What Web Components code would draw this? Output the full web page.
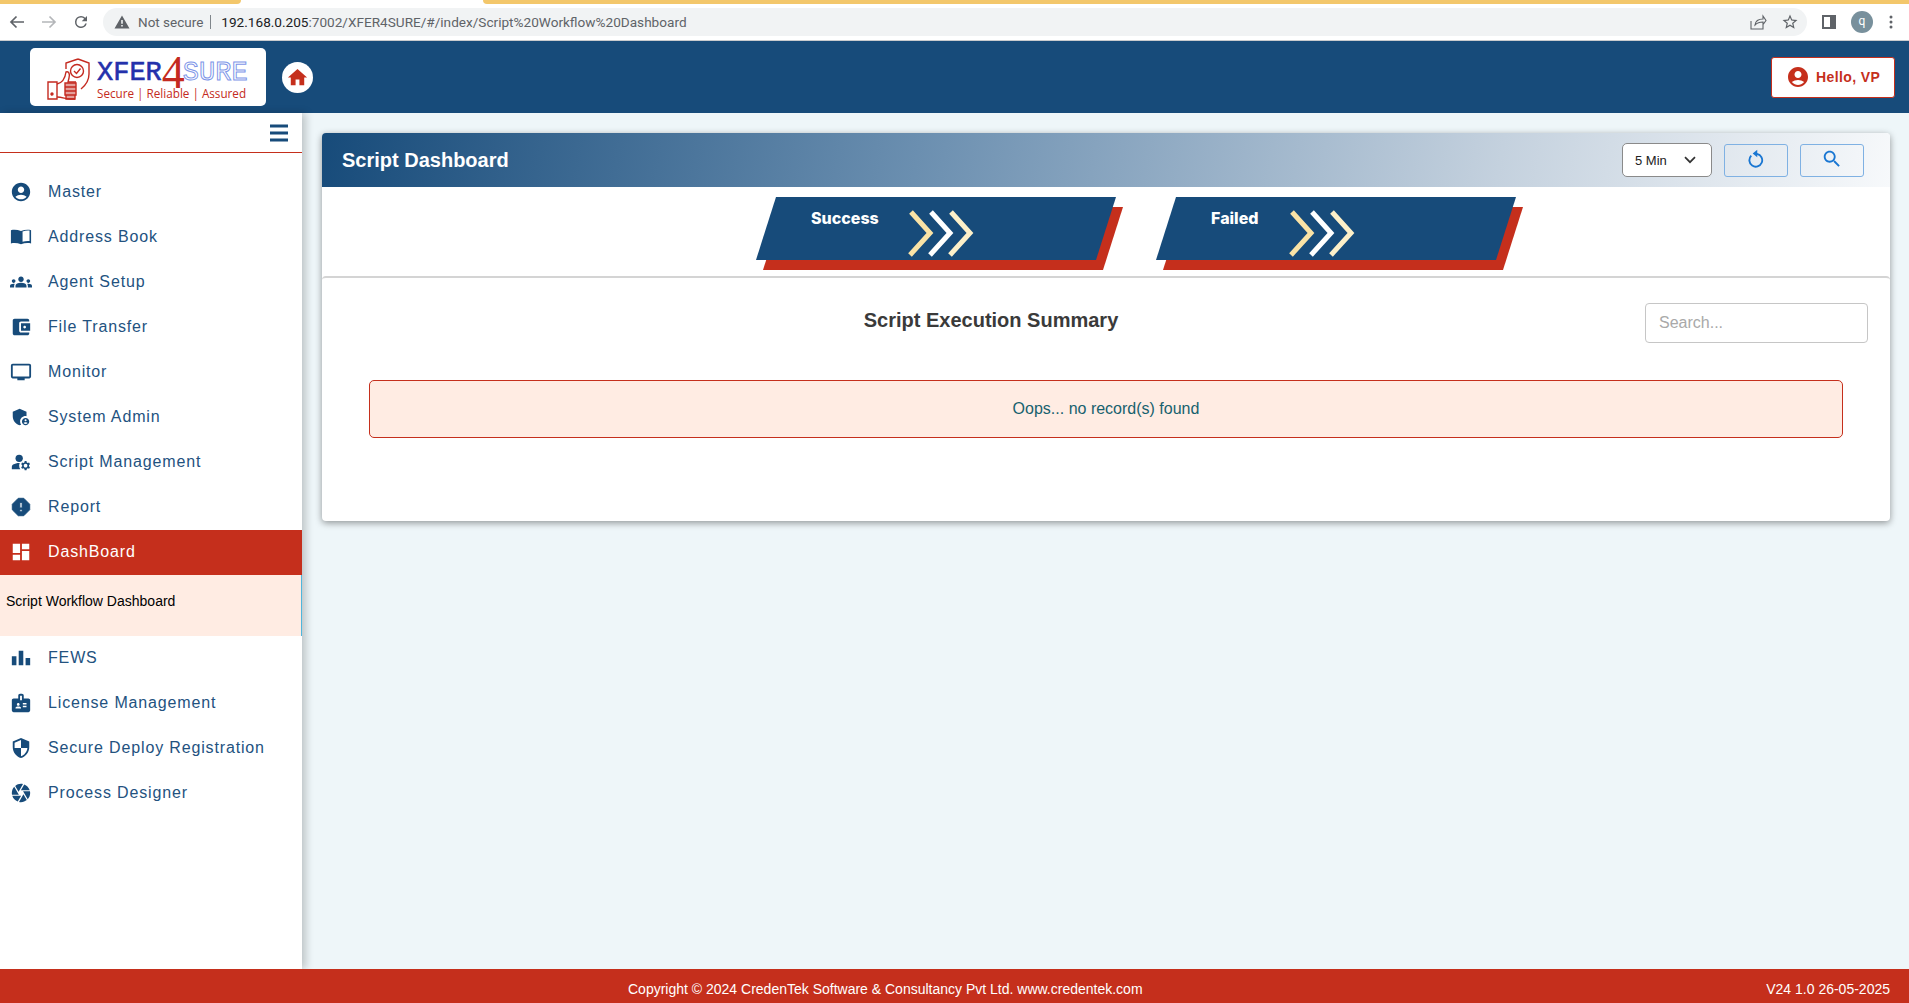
<!DOCTYPE html>
<html>
<head>
<meta charset="utf-8">
<title>Script Dashboard</title>
<style>
  html, body { margin: 0; height: 100%; overflow: hidden; }
  body { font-family: "Liberation Sans", Arial, sans-serif; }
  #app { display: flex; flex-direction: column; height: 100vh; }
  #middle { display: flex; flex: 1; min-height: 0; }
</style>
</head>
<body>
<div id="app">
  <browser-bar></browser-bar>
  <app-header></app-header>
  <div id="middle">
    <side-nav>
      <nav-item icon="account">Master</nav-item>
      <nav-item icon="book">Address Book</nav-item>
      <nav-item icon="groups">Agent Setup</nav-item>
      <nav-item icon="wallet">File Transfer</nav-item>
      <nav-item icon="tv">Monitor</nav-item>
      <nav-item icon="admin">System Admin</nav-item>
      <nav-item icon="manage">Script Management</nav-item>
      <nav-item icon="report">Report</nav-item>
      <nav-item icon="dashboard" active>DashBoard</nav-item>
      <nav-sub>Script Workflow Dashboard</nav-sub>
      <nav-item icon="bars">FEWS</nav-item>
      <nav-item icon="badge">License Management</nav-item>
      <nav-item icon="security">Secure Deploy Registration</nav-item>
      <nav-item icon="camera">Process Designer</nav-item>
    </side-nav>
    <dash-main>
      <dash-panel heading="Script Dashboard">
        <status-banner slot="banners" chevron="151">Success</status-banner>
        <status-banner slot="banners" chevron="132">Failed</status-banner>
        <summary-card heading="Script Execution Summary">Oops... no record(s) found</summary-card>
      </dash-panel>
    </dash-main>
  </div>
  <app-footer version="V24 1.0 26-05-2025">Copyright © 2024 CredenTek Software &amp; Consultancy Pvt Ltd. www.credentek.com</app-footer>
</div>

<script>
const ICONS = {
  account: '<path d="M12 2C6.48 2 2 6.48 2 12s4.48 10 10 10 10-4.48 10-10S17.52 2 12 2zm0 4c1.93 0 3.5 1.57 3.5 3.5S13.93 13 12 13s-3.5-1.57-3.5-3.5S10.07 6 12 6zm0 14c-2.03 0-4.43-.82-6.14-2.88C7.55 15.8 9.68 15 12 15s4.45.8 6.14 2.12C16.43 19.18 14.03 20 12 20z"/>',
  book: '<path d="M1 4.500c3.500-.8 7.500-.5 11 1V20c-3.500-1.500-7.500-1.800-11-1z"/><path fill-rule="evenodd" d="M12 5.500c3.500-1.500 7.500-1.800 11-1V19c-3.500-.8-7.500-.5-11 1zm9.300-.6c-2.500-.3-5.200.1-7.600 1.100v11.300c2.400-.9 5.100-1.200 7.600-.9z"/>',
  groups: '<path d="M12 12.750c1.630 0 3.070.390 4.240.900 1.080.480 1.760 1.560 1.760 2.730V18H6v-1.610c0-1.180.680-2.260 1.760-2.730 1.170-.520 2.610-.910 4.240-.910zM4 13c1.100 0 2-.900 2-2s-.900-2-2-2-2 .900-2 2 .900 2 2 2zm1.130 1.100c-.370-.060-.740-.100-1.130-.100-.990 0-1.930.210-2.780.580C.480 14.900 0 15.620 0 16.430V18h4.500v-1.610c0-.830.230-1.610.630-2.290zM20 13c1.100 0 2-.900 2-2s-.900-2-2-2-2 .900-2 2 .900 2 2 2zm4 3.430c0-.810-.480-1.530-1.220-1.850-.850-.370-1.790-.580-2.780-.580-.390 0-.760.040-1.130.100.400.680.630 1.460.630 2.290V18H24v-1.570zM12 6c1.660 0 3 1.340 3 3s-1.340 3-3 3-3-1.340-3-3 1.340-3 3-3z"/>',
  wallet: '<path d="M21 18v1c0 1.100-.900 2-2 2H5c-1.110 0-2-.900-2-2V5c0-1.100.890-2 2-2h14c1.100 0 2 .900 2 2v1h-9c-1.110 0-2 .900-2 2v8c0 1.100.890 2 2 2h9zm-9-2h10V8H12v8zm4-2.500c-.830 0-1.500-.670-1.500-1.500s.670-1.500 1.500-1.500 1.500.670 1.500 1.500-.670 1.500-1.500 1.500z"/>',
  tv: '<path d="M21 3H3c-1.100 0-2 .900-2 2v12c0 1.100.900 2 2 2h5v2h8v-2h5c1.100 0 1.990-.900 1.990-2L23 5c0-1.100-.900-2-2-2zm0 14H3V5h18v12z"/>',
  admin: '<path d="M17 11c.340 0 .670.040 1 .090V6.270L10.500 3 3 6.270v4.910c0 4.540 3.200 8.790 7.500 9.820.550-.130 1.080-.320 1.600-.550-.690-.980-1.100-2.170-1.100-3.450 0-3.310 2.690-6 6-6z"/><path fill-rule="evenodd" d="M17 13c-2.210 0-4 1.790-4 4s1.790 4 4 4 4-1.790 4-4-1.790-4-4-4zm0 1.400a1.100 1.100 0 1 1 0 2.200 1.100 1.100 0 0 1 0-2.200zm0 5.200c-1 0-1.800-.400-2.200-1 .300-.600 1.300-.900 2.200-.900s1.900.300 2.200.900c-.400.600-1.200 1-2.200 1z"/>',
  manage: '<circle cx="10" cy="8" r="4"/><path d="M10.670 13.020c-.220-.010-.440-.020-.670-.020-2.420 0-4.680.670-6.610 1.820C2.510 15.340 2 16.320 2 17.350V20h9.260c-.790-1.130-1.260-2.510-1.260-4 0-1.070.250-2.070.670-2.980z"/><path d="M20.750 16c0-.220-.030-.420-.060-.630l1.140-1.010-1-1.730-1.450.490c-.320-.270-.680-.480-1.080-.630L18 11h-2l-.300 1.490c-.400.150-.760.360-1.080.630l-1.450-.490-1 1.730 1.140 1.010c-.030.210-.060.410-.060.630s.030.420.060.630l-1.140 1.010 1 1.730 1.450-.490c.320.270.680.480 1.080.630L16 21h2l.300-1.490c.400-.150.760-.360 1.080-.630l1.450.490 1-1.730-1.140-1.010c.030-.210.060-.410.060-.630zM17 18c-1.100 0-2-.900-2-2s.900-2 2-2 2 .900 2 2-.900 2-2 2z"/>',
  report: '<path d="M15 2.500H9L2.500 9v6L9 21.500h6l6.500-6.500V9zM12 17.300c-.720 0-1.300-.580-1.300-1.300 0-.720.580-1.300 1.300-1.300.720 0 1.300.580 1.300 1.300 0 .720-.580 1.300-1.300 1.300zm1.200-4.300h-2.400V7h2.400z" stroke="currentColor" stroke-width="1" stroke-linejoin="round"/>',
  dashboard: '<path d="M3 13h8V3H3v10zm0 8h8v-6H3v6zm10 0h8V11h-8v10zm0-18v6h8V3h-8z"/>',
  bars: '<path d="M2 10h5v10H2zM9.500 4h5v16h-5zM17 12h5v8h-5z"/>',
  badge: '<path d="M20 7h-5V4c0-1.100-.900-2-2-2h-2c-1.100 0-2 .900-2 2v3H4c-1.100 0-2 .900-2 2v11c0 1.100.900 2 2 2h16c1.100 0 2-.900 2-2V9c0-1.100-.900-2-2-2zM9 12c.830 0 1.500.670 1.500 1.500S9.830 15 9 15s-1.500-.670-1.500-1.500S8.170 12 9 12zm3 6H6v-.750c0-1 2-1.500 3-1.500s3 .500 3 1.500V18zm1-9h-2V4h2v5zm5 7.500h-4V15h4v1.500zm0-3h-4V12h4v1.500z"/>',
  security: '<path d="M12 1L3 5v6c0 5.550 3.840 10.740 9 12 5.160-1.260 9-6.450 9-12V5l-9-4zm0 10.990h7c-.530 4.120-3.280 7.790-7 8.940V12H5V6.300l7-3.110v8.800z"/>',
  camera: '<path d="M9.400 10.500l4.770-8.260C13.470 2.090 12.750 2 12 2c-2.400 0-4.600.850-6.320 2.250l3.660 6.350.060-.100zM21.540 9c-.920-2.920-3.150-5.260-6-6.340L11.880 9h9.660zm.260 1h-7.490l.290.500 4.760 8.250C21 16.970 22 14.610 22 12c0-.690-.070-1.350-.200-2zM8.540 12l-3.900-6.750C3.010 7.030 2 9.390 2 12c0 .690.070 1.350.200 2h7.490l-1.150-2zm-6.080 3c.920 2.920 3.150 5.260 6 6.340L12.120 15H2.460zm11.270 0l-3.900 6.760c.700.150 1.420.240 2.170.240 2.400 0 4.600-.850 6.320-2.250l-3.660-6.350-.930 1.600z"/>',
  home: '<path d="M10 20v-6h4v6h5v-8h3L12 3 2 12h3v8z"/>',
  search: '<path d="M15.500 14h-.790l-.280-.270C15.410 12.590 16 11.110 16 9.500 16 5.910 13.090 3 9.500 3S3 5.910 3 9.500 5.910 16 9.500 16c1.610 0 3.090-.590 4.230-1.570l.270.280v.790l5 4.990L20.490 19l-4.990-5zm-6 0C7.010 14 5 11.990 5 9.500S7.010 5 9.500 5 14 7.010 14 9.500 11.990 14 9.500 14z"/>',
  refresh: '<path d="M13.500 1L8 5.500l5.500 4.500V7.100a6.600 6.600 0 1 1-6.400 1.700L5.500 7.300A8.800 8.800 0 1 0 13.500 4.900z"/>',
  menu: '<path d="M3 3.500h18v3H3zM3 10.500h18v3H3zM3 17.500h18v3H3z"/>',
};

class AppIcon extends HTMLElement {
  connectedCallback() {
    const size = this.getAttribute('size') || 24;
    this.attachShadow({ mode: 'open' }).innerHTML = `
      <style>
        :host { display: inline-flex; flex: none; width: ${size}px; height: ${size}px; }
        svg { width: 100%; height: 100%; fill: currentColor; display: block; }
      </style>
      <svg viewBox="0 0 24 24">${ICONS[this.getAttribute('name')] || ''}</svg>`;
  }
}

class BrowserBar extends HTMLElement {
  constructor() {
    super();
    this.attachShadow({ mode: 'open' }).innerHTML = `
      <style>
        :host { display: block; height: 41px; background: #fff; border-bottom: 1px solid #c9cbce; box-sizing: border-box; }
        .strip { display: flex; height: 4px; }
        .strip div { background: #f3c76b; }
        .strip .a { width: 241px; border-bottom-right-radius: 4px; }
        .strip .gap { width: 242px; background: #fff; }
        .strip .b { flex: 1; border-bottom-left-radius: 4px; }
        .row { display: flex; align-items: center; height: 36px; }
        .nav { width: 103px; display: flex; flex: none; }
        .nav svg { margin-left: 14px; }
        .nav svg:first-child { margin-left: 8px; }
        .omni { height: 28px; width: 1704px; background: #f1f3f4; border-radius: 14px; display: flex; align-items: center; color: #5f6368; font: 13.500px Roboto, "Liberation Sans", sans-serif; }
        .warn { margin-left: 11px; margin-right: 8px; }
        .sep { width: 1px; height: 14px; background: #80868b; margin: 0 10px 0 7px; }
        .url { color: #202124; flex: 1; font-size: 13.600px; }
        .url span { color: #5f6368; }
        .end { display: flex; align-items: center; margin-right: 8px; }
        .end svg + svg { margin-left: 14px; }
        .tools { display: flex; align-items: center; flex: 1; }
        .avatar { width: 22px; height: 22px; margin-left: 15px; border-radius: 50%; background: #78909c; color: #fff; font: 12px/20px Roboto, sans-serif; text-align: center; }
      </style>
      <div class="strip"><div class="a"></div><div class="gap"></div><div class="b"></div></div>
      <div class="row">
        <div class="nav">
          <svg width="18" height="18" viewBox="0 0 18 18" fill="none" stroke="#5f6368" stroke-width="1.700"><path d="M16 9H3M8.500 3.500L3 9l5.500 5.500"/></svg>
          <svg width="18" height="18" viewBox="0 0 18 18" fill="none" stroke="#b4b6b9" stroke-width="1.700"><path d="M2 9h13M9.500 3.500L15 9l-5.500 5.500"/></svg>
          <svg width="18" height="18" viewBox="0 0 24 24" fill="#5f6368"><path d="M17.650 6.350A7.960 7.960 0 0 0 12 4a8 8 0 1 0 7.730 10h-2.080A6 6 0 1 1 12 6c1.660 0 3.140.690 4.220 1.780L13 11h7V4l-2.350 2.350z"/></svg>
        </div>
        <div class="omni">
          <svg class="warn" width="16" height="16" viewBox="0 0 16 16" fill="#5f6368"><path d="M8 1.500L.500 14.500h15zM8.800 12.500H7.200v-1.600h1.600zm0-2.800H7.200V6h1.600z"/></svg>
          <span>Not secure</span><i class="sep"></i>
          <span class="url">192.168.0.205<span>:7002/XFER4SURE/#/index/Script%20Workflow%20Dashboard</span></span>
          <div class="end">
            <svg width="18" height="18" viewBox="0 0 18 18" fill="none" stroke="#5f6368" stroke-width="1.100"><path d="M2 8v8h12v-4M6 12c.500-4 3.500-6 8-6V3l3 4.500-3 4V9c-3.500 0-6 1-8 3z"/></svg>
            <svg width="18" height="18" viewBox="0 0 24 24" fill="#5f6368"><path d="M22 9.240l-7.190-.620L12 2 9.190 8.630 2 9.240l5.460 4.730L5.820 21 12 17.270 18.180 21l-1.630-7.030L22 9.240zM12 15.400l-3.760 2.270 1-4.280-3.320-2.880 4.380-.380L12 6.100l1.710 4.040 4.380.380-3.320 2.880 1 4.280L12 15.400z"/></svg>
          </div>
        </div>
        <div class="tools">
          <svg style="margin-left:15px" width="14" height="14" viewBox="0 0 14 14"><path fill="#5f6368" d="M0 0h14v14H0z"/><path fill="#fff" d="M2 2h6v10H2z"/></svg>
          <div class="avatar">q</div>
          <svg style="margin-left:16px" width="4" height="14" viewBox="0 0 4 14" fill="#5f6368"><circle cx="2" cy="2" r="1.500"/><circle cx="2" cy="7" r="1.500"/><circle cx="2" cy="12" r="1.500"/></svg>
        </div>
      </div>`;
  }
}

class BrandLogo extends HTMLElement {
  constructor() {
    super();
    this.attachShadow({ mode: 'open' }).innerHTML = `
      <style>
        :host { display: flex; width: 236px; height: 58px; background: #fff; border-radius: 5px; box-sizing: border-box; padding: 10px 0 0 17px; }
        svg.mark { flex: none; width: 47px; height: 43px; }
        .words { margin-left: 3px; display: flex; flex-direction: column; }
        .top { display: flex; align-items: flex-end; height: 26px; font: 27px/26px "Liberation Mono", monospace; color: #2431ab; -webkit-text-stroke: .6px #2431ab; margin-top: 2px; }
        .four { font: 46px/26px "Liberation Serif", serif; color: #c42a20; -webkit-text-stroke: 0; width: 21px; margin-top: -10px; }
        .sure { color: #fff; -webkit-text-stroke: 1px #7e96e8; }
        .tag { font: 11.700px/14px "Open Sans", sans-serif; color: #c42a20; white-space: nowrap; }
      </style>
      <svg class="mark" viewBox="0 0 47 43" fill="none" stroke="#c42a20" stroke-width="1.400">
        <path d="M31 1l11 4v11c0 6-3 11-8 15M31 1L19 5v6"/>
        <circle cx="30" cy="13" r="6.500"/>
        <path d="M27 13l2.500 2.500 4-5"/>
        <path d="M1 24h9v17H1z"/><circle cx="5" cy="36" r="1" fill="#c42a20"/>
        <path d="M10 26c5-1 8-5 9-12 3-1 4 2 3 6l-1 4h8M10 39c5 0 9 2 13 2h5"/>
        <path d="M18 25h11v4H18zM18 29h11v4H18zM18 33h11v4H18zM19 37h9v4h-9z" fill="#c42a20" fill-opacity=".45"/>
      </svg>
      <div class="words">
        <div class="top"><span>XFER</span><span class="four">4</span><span class="sure">SURE</span></div>
        <div class="tag">Secure | Reliable | Assured</div>
      </div>`;
  }
}

class AppHeader extends HTMLElement {
  constructor() {
    super();
    this.attachShadow({ mode: 'open' }).innerHTML = `
      <style>
        :host { display: flex; align-items: center; flex: none; height: 72px; background: #174b7a; padding: 0 14px 0 30px; }
        .home { width: 31px; height: 31px; margin-left: 16px; margin-top: 1px; border-radius: 50%; background: #fff; color: #c52f1c; display: flex; align-items: center; justify-content: center; }
        .user { margin-left: auto; width: 124px; height: 41px; box-sizing: border-box; background: #fff; border: 1px solid #c52f1c; border-radius: 3px; color: #c52f1c; display: flex; align-items: center; padding-left: 14px; font: bold 14px "Liberation Sans", sans-serif; letter-spacing: .4px; white-space: nowrap; }
        .user app-icon { margin-right: 6px; }
      </style>
      <brand-logo></brand-logo>
      <div class="home"><app-icon name="home" size="23"></app-icon></div>
      <div class="user"><app-icon name="account" size="24"></app-icon>Hello, VP</div>`;
  }
}

class SideNav extends HTMLElement {
  constructor() {
    super();
    this.attachShadow({ mode: 'open' }).innerHTML = `
      <style>
        :host { display: block; flex: none; width: 302px; background: #fff; box-shadow: 4px 0 8px rgba(0,0,0,.2); position: relative; }
        .top { height: 40px; box-sizing: border-box; border-bottom: 1px solid #c52f1c; display: flex; align-items: center; justify-content: flex-end; padding-right: 11px; color: #174b7a; }
        .list { padding-top: 16px; }
      </style>
      <div class="top"><app-icon name="menu" size="24"></app-icon></div>
      <div class="list"><slot></slot></div>`;
  }
}

class NavItem extends HTMLElement {
  connectedCallback() {
    const active = this.hasAttribute('active');
    this.attachShadow({ mode: 'open' }).innerHTML = `
      <style>
        :host { display: flex; align-items: center; box-sizing: border-box; height: 45px; padding-left: 10px; letter-spacing: .85px; font: 16px "Liberation Sans", sans-serif; color: ${active ? '#fff' : '#23527f'}; ${active ? 'background: #c52f1c; margin-top: 1px; padding-bottom: 2px;' : ''} }
        app-icon { margin-right: 16px; color: ${active ? '#fff' : '#174b7a'}; }
      </style>
      <app-icon name="${this.getAttribute('icon')}" size="22"></app-icon><slot></slot>`;
  }
}

class NavSub extends HTMLElement {
  constructor() {
    super();
    this.attachShadow({ mode: 'open' }).innerHTML = `
      <style>
        :host { display: block; height: 61px; margin-bottom: -1px; box-sizing: border-box; padding: 18px 0 0 6px; background: #ffece3; border-right: 1px solid #4fb6dc; color: #000; font: 14px/16px "Liberation Sans", sans-serif; }
      </style>
      <slot></slot>`;
  }
}

class DashMain extends HTMLElement {
  constructor() {
    super();
    this.attachShadow({ mode: 'open' }).innerHTML = `
      <style>
        :host { display: block; flex: 1; min-width: 0; background: #eef6f9; padding: 20px 19px 0 20px; }
      </style>
      <slot></slot>`;
  }
}

class DashPanel extends HTMLElement {
  connectedCallback() {
    this.attachShadow({ mode: 'open' }).innerHTML = `
      <style>
        :host { display: block; background: #fff; border-radius: 4px; box-shadow: 0 2px 7px rgba(0,0,0,.4); }
        .head { height: 54px; box-sizing: border-box; display: flex; align-items: center; padding: 0 26px 0 20px; border-radius: 4px 4px 0 0; background: linear-gradient(100deg, #174b7a 0%, #6b8fb0 38%, #c4d1de 75%, #f7f9fb 100%); }
        h1 { margin: 0; flex: 1; font: bold 20px "Liberation Sans", sans-serif; color: #fff; }
        .select { width: 90px; height: 34px; box-sizing: border-box; background: #fff; border: 1px solid #8a8a8a; border-radius: 5px; display: flex; align-items: center; justify-content: space-between; padding: 0 15px 0 12px; font: 13px "Liberation Sans", sans-serif; color: #222; margin-right: 12px; }
        .btn { width: 64px; height: 33px; box-sizing: border-box; padding-bottom: 2px; border: 1px solid #7fb1e3; border-radius: 3px; display: flex; align-items: center; justify-content: center; color: #1976d2; }
        .btn + .btn { margin-left: 12px; }
        .banners { display: flex; gap: 33px; height: 89px; box-sizing: border-box; padding: 10px 0 0 434px; }
      </style>
      <div class="head">
        <h1>${this.getAttribute('heading')}</h1>
        <div class="select">5 Min<svg width="12" height="8" viewBox="0 0 12 8" fill="none" stroke="#333" stroke-width="1.700"><path d="M1 1.200l5 5 5-5"/></svg></div>
        <div class="btn"><app-icon name="refresh" size="20"></app-icon></div>
        <div class="btn"><app-icon name="search" size="22"></app-icon></div>
      </div>
      <div class="banners"><slot name="banners"></slot></div>
      <slot></slot>`;
  }
}

class StatusBanner extends HTMLElement {
  connectedCallback() {
    const x = Number(this.getAttribute('chevron'));
    const chevron = (dx, color) => `<path d="M${x + dx + 4} 15L${x + dx + 23} 36 ${x + dx + 3} 58" fill="none" stroke="${color}" stroke-width="5"/>`;
    this.attachShadow({ mode: 'open' }).innerHTML = `
      <style>
        :host { display: grid; width: 367px; height: 73px; }
        svg, .label { grid-area: 1 / 1; }
        svg { display: block; }
        .label { padding: 11px 0 0 55px; font: 800 16px/20px Inter, "Liberation Sans", sans-serif; color: #fff; }
      </style>
      <svg width="367" height="73" viewBox="0 0 367 73">
        <polygon points="27,10 367,10 347,73 7,73" fill="#c52f1c"/>
        <polygon points="20,0 360,0 340,63 0,63" fill="#174b7a"/>
        ${chevron(0, '#fae3a6')}${chevron(20, '#ffffff')}${chevron(40, '#fdf0c9')}
      </svg>
      <div class="label"><slot></slot></div>`;
  }
}

class SummaryCard extends HTMLElement {
  connectedCallback() {
    this.attachShadow({ mode: 'open' }).innerHTML = `
      <style>
        :host { display: block; border-top: 2px solid #d4d4d4; border-radius: 4px; box-sizing: border-box; height: 245px; padding: 25px 22px 0 47px; }
        .row { display: flex; align-items: flex-start; margin-left: -47px; }
        h2 { flex: 1; margin: 0; padding-left: 15px; text-align: center; font: bold 20px/34px "Liberation Sans", sans-serif; color: #3a3a3a; }
        input { width: 223px; height: 40px; box-sizing: border-box; border: 1px solid #c6c6c6; border-radius: 4px; padding: 0 13px; font: 16px "Liberation Sans", sans-serif; outline: none; }
        input::placeholder { color: #a9a9a9; }
        .alert { margin: 37px 25px 0 0; height: 58px; box-sizing: border-box; background: #ffece3; border: 1px solid #c52f1c; border-radius: 5px; display: flex; align-items: center; justify-content: center; font: 16px "Liberation Sans", sans-serif; color: #17616e; }
      </style>
      <div class="row">
        <h2>${this.getAttribute('heading')}</h2>
        <input type="text" placeholder="Search...">
      </div>
      <div class="alert"><slot></slot></div>`;
  }
}

class AppFooter extends HTMLElement {
  connectedCallback() {
    this.attachShadow({ mode: 'open' }).innerHTML = `
      <style>
        :host { display: flex; flex: none; height: 34px; box-sizing: border-box; align-items: center; justify-content: space-between; background: #c52f1c; color: #fff; padding: 6px 19px 0 628px; font: 14px "Liberation Sans", sans-serif; position: relative; }
      </style>
      <span><slot></slot></span><span>${this.getAttribute('version')}</span>`;
  }
}

customElements.define('app-icon', AppIcon);
customElements.define('browser-bar', BrowserBar);
customElements.define('brand-logo', BrandLogo);
customElements.define('app-header', AppHeader);
customElements.define('side-nav', SideNav);
customElements.define('nav-item', NavItem);
customElements.define('nav-sub', NavSub);
customElements.define('dash-main', DashMain);
customElements.define('dash-panel', DashPanel);
customElements.define('status-banner', StatusBanner);
customElements.define('summary-card', SummaryCard);
customElements.define('app-footer', AppFooter);
</script>
</body>
</html>
